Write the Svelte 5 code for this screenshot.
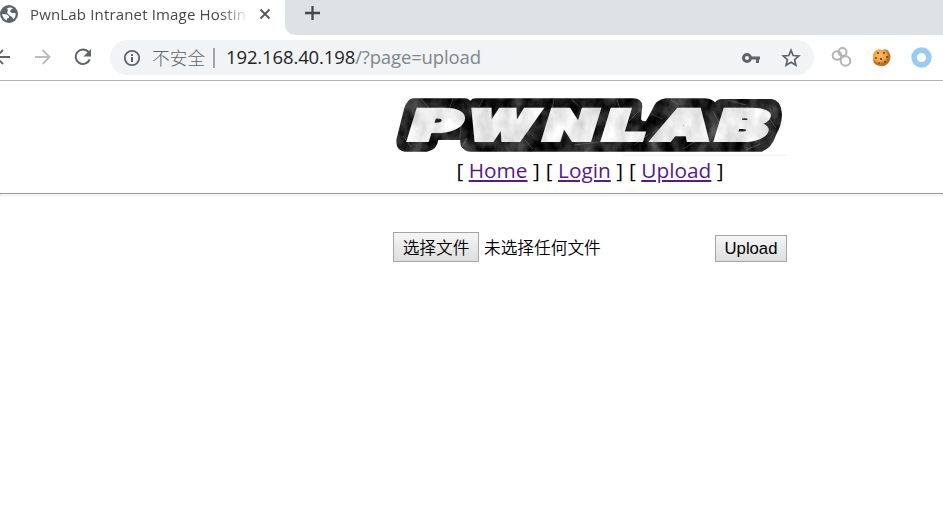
<script>
  const links = ['Home', 'Login', 'Upload'];
  const letters = [
    { ch: 'P', x: 14, w: 50 },
    { ch: 'W', x: 71, w: 68 },
    { ch: 'N', x: 148.500, w: 50 },
    { ch: 'L', x: 208, w: 41 },
    { ch: 'A', x: 259, w: 55 },
    { ch: 'B', x: 321, w: 50 }
  ];
</script>

<div class="window">
  <div class="tabs">
    <div class="tab">
      <svg class="globe" width="20" height="20" viewBox="0 0 20 20">
        <circle cx="10" cy="10" r="9" fill="#5f6368" />
        <path d="M8 4.500Q11 2.500 14 4.500L12 5.500 11 7.500 13 9 16.500 9Q17 13 14.500 15L13 13 10.500 11.500 9 10 8 8.500 9 6.500Z" fill="#fff" />
        <path d="M3 10L8 10.500 10 12.500 10 14 8 14.500 8 16.500Q4 15 3 10Z" fill="#fff" />
      </svg>
      <span class="title">PwnLab Intranet Image Hostin</span>
      <svg class="close" width="12" height="12" viewBox="0 0 12 12"><path d="M1.5 1.5l9 9m0-9l-9 9" stroke="#53565a" stroke-width="1.8" /></svg>
    </div>
    <div class="strip">
      <svg width="16" height="16" viewBox="0 0 16 16"><path d="M8.500 1v14M1 8h15" stroke="#45484c" stroke-width="2.3" /></svg>
    </div>
  </div>

  <div class="toolbar">
    <svg class="nav" width="100" height="45" viewBox="0 0 100 45" fill="none" stroke-width="1.9">
      <path d="M10 22H-5M3 15l-7 7 7 7" stroke="#5f6368" />
      <path d="M35 22h14M42.500 15l7 7-7 7" stroke="#babcbe" />
      <path d="M88.700 17.200A7.300 7.300 0 1 0 89.700 24.500" stroke="#5f6368" stroke-width="2" />
      <path d="M91 14v7.500h-7.500z" fill="#5f6368" />
    </svg>
    <div class="omnibox">
      <svg class="info" width="18" height="18" viewBox="0 0 18 18"><circle cx="9" cy="9" r="7.200" fill="none" stroke="#5f6368" stroke-width="1.800" /><path d="M9 8v5M9 5v1.900" stroke="#5f6368" stroke-width="2" /></svg>
      <span class="insecure">不安全</span>
      <span class="sep"></span>
      <span class="url">192.168.40.198<span class="path">/?page=upload</span></span>
      <svg class="key" width="20" height="12" viewBox="0 0 20 12"><circle cx="6" cy="6" r="3.500" fill="none" stroke="#5f6368" stroke-width="3" /><path d="M10 4.500h9v3h-1v3.500h-3v-3.500h-5z" fill="#5f6368" /></svg>
      <svg class="star" width="20" height="20" viewBox="0 0 20 20"><path d="M10 2.300l2.200 5.200 5.600.5-4.200 3.700 1.300 5.500-4.900-2.900-4.900 2.900 1.300-5.500-4.200-3.700 5.600-.5z" fill="none" stroke="#5f6368" stroke-width="1.700" /></svg>
    </div>
    <svg class="extensions" width="129" height="45" viewBox="814 35 129 45">
      <g fill="none" stroke="#b4b4b4" stroke-width="2"><circle cx="842.500" cy="52" r="4" /><circle cx="837" cy="55.500" r="4.300" /><circle cx="845.500" cy="61" r="4.800" /></g>
      <defs><radialGradient id="biscuit" cx=".4" cy=".35"><stop offset="0" stop-color="#f8be62" /><stop offset=".75" stop-color="#eda345" /><stop offset="1" stop-color="#bd7028" /></radialGradient></defs>
      <path d="M874 52Q877 48 882 50 887 48 889 52 892 57 889 62 886 67 880 66 873 65 873 59 872 55 874 52Z" fill="url(#biscuit)" />
      <g fill="#6b3e1a"><circle cx="878" cy="53" r="1" /><circle cx="884" cy="53" r="1" /><circle cx="887" cy="57" r="1" /><circle cx="881" cy="59" r="1.100" /><circle cx="876" cy="58" r=".9" /><circle cx="885" cy="62" r=".9" /><circle cx="879" cy="63" r=".8" /></g>
      <circle cx="921.500" cy="57.500" r="7.400" fill="none" stroke="#98cdf0" stroke-width="5.600" />
    </svg>
  </div>

  <header>
    <svg class="logo" width="394" height="60" viewBox="0 0 394 60" role="img" aria-label="PWNLAB">
      <defs>
        <filter id="darkMarble" x="0" y="0" width="1" height="1" color-interpolation-filters="sRGB">
          <feTurbulence type="fractalNoise" baseFrequency=".07 .05" numOctaves="5" seed="8" />
          <feColorMatrix values=".5 .2 0 0 -.21  .5 .2 0 0 -.21  .5 .2 0 0 -.21  0 0 0 0 1" />
          <feComposite in2="SourceAlpha" operator="in" />
        </filter>
        <filter id="lightMarble" x="-.1" y="-.5" width="1.2" height="2" color-interpolation-filters="sRGB">
          <feTurbulence type="fractalNoise" baseFrequency=".06 .04" numOctaves="4" seed="3" />
          <feColorMatrix values=".3 0 0 0 .77  .3 0 0 0 .77  .3 0 0 0 .77  0 0 0 0 1" />
          <feComposite in2="SourceAlpha" operator="in" />
        </filter>
        <path id="plate" d="M20 2.300H72Q75 2.300 77.300 4.700Q79 2.300 83 2.300H240Q249 2.500 249.300 10L248 23Q249 26 253 25L259 14Q263 3 273 2.300H311Q318 2.300 322 6.300Q325 3 329 3H379Q387 4 388.700 15.700Q390 27 383 39Q379 52 368.700 55.700H77Q66 54 67.300 44H45.300Q44 54 34 55.700H12Q2 54 3.500 43L11 13Q14 3 20 2.300Z" />
        <clipPath id="rim"><use href="#plate" /></clipPath>
      </defs>
      <path d="M230 59.500h164" stroke="#f6f6f6" stroke-width="2" />
      <use href="#plate" fill="#171717" filter="url(#darkMarble)" />
      <g class="streaks" clip-path="url(#rim)">
        <path d="M28 3l8 9 2 5M60 3l-5 13M69 19l-2 24M90 3l-4 8M161 3l-4 21M179 4l8 7M224 4l8 23M248 13l-12 12M278 4l8 5M335 4l18 5M372 16l11 16M18 51l-8-11M69 51l5-9M132 44l8 9M181 49l25-3M241 49l14-10M290 53l18-11M353 54l14-6M259 18l10 5M320 15l6 12" />
      </g>
      <g class="face" filter="url(#lightMarble)">
        {#each letters as l}
          <text transform="translate({l.x} 44) skewX(-17)" textLength={l.w} lengthAdjust="spacingAndGlyphs">{l.ch}</text>
        {/each}
      </g>
    </svg>
    <nav>
      {#each links as link}
        <span>[ <a href="#{link}">{link}</a> ]</span>
      {/each}
    </nav>
  </header>

  <main>
    <div class="file"><button class="choose">选择文件</button><span>未选择任何文件</span></div>
    <button class="submit">Upload</button>
  </main>
</div>

<style>
  .window { width: 943px; height: 514px; overflow: hidden; background: #fff; font-family: "Open Sans", "Noto Sans CJK SC", sans-serif; }
  svg { display: block; flex: none; }
  .tabs { display: flex; height: 35px; background: #fff; }
  .tab { width: 285px; display: flex; align-items: center; box-sizing: border-box; padding-bottom: 7px; }
  .globe { margin-left: -1px; }
  .title { margin-left: 11px; width: 218px; white-space: nowrap; font-size: 15px; line-height: 22px; letter-spacing: .16px; color: #45494d; mask-image: linear-gradient(90deg, #000 190px, transparent 220px); }
  .close { margin-left: 11px; }
  .strip { flex: 1; background: #dee1e6; border-bottom-left-radius: 10px; padding: 5px 0 0 19px; }
  .toolbar { height: 45px; display: flex; align-items: center; border-bottom: 1px solid #b6b4b6; }
  .omnibox { width: 704px; height: 35px; margin-left: 10px; border-radius: 18px; background: #f1f3f4; display: flex; align-items: center; }
  .info { margin-left: 13px; }
  .insecure { margin-left: 11px; width: 55px; font-family: "Noto Sans CJK SC", sans-serif; font-size: 17.700px; font-weight: 300; line-height: 24px; padding-bottom: 2px; color: #5f6368; white-space: nowrap; }
  .sep { margin-left: 6px; width: 2px; height: 20px; background: #a2a5a8; }
  .url { margin-left: 11px; width: 300px; font-size: 18.500px; line-height: 25px; padding-bottom: 2px; color: #222426; letter-spacing: -.13px; white-space: nowrap; }
  .path { color: #80868b; }
  .key { margin-left: 215px; }
  .star { margin-left: 20px; }
  header { height: 112px; display: flex; flex-direction: column; align-items: center; border-bottom: 1px solid #929292; box-shadow: 0 2px 0 -1px #fff, 0 2px 0 #e9e9e9; }
  .logo { margin: 15px -236px 0 0; }
  .logo text { font-family: Inter, sans-serif; font-size: 41.500px; font-weight: 900; }
  .streaks { fill: none; stroke: #aaa; stroke-width: .7px; opacity: .45; }
  .face { fill: #eee; stroke: #eee; stroke-width: 4px; }
  nav { display: flex; gap: 6px; margin-left: 237px; font-size: 20.800px; line-height: 28px; letter-spacing: .02px; }
  a { color: #551a8b; text-decoration: underline; text-decoration-thickness: 1.500px; text-underline-offset: 2px; }
  main { width: 394px; margin: 38px 0 0 393px; display: flex; justify-content: space-between; align-items: flex-end; }
  .file { display: flex; align-items: center; gap: 5px; font-family: "Noto Sans CJK SC", sans-serif; font-size: 16.700px; font-weight: 350; }
  button { padding: 0; border: 1px solid #a5a5a5; border-radius: 0; background: linear-gradient(#f5f5f5, #dedede); color: #000; box-sizing: border-box; }
  .choose { width: 86px; height: 30px; font: 350 16.700px/24px "Noto Sans CJK SC", sans-serif; }
  .submit { width: 72px; height: 27px; font: 16.700px "Liberation Sans", Arial, sans-serif; }
</style>
